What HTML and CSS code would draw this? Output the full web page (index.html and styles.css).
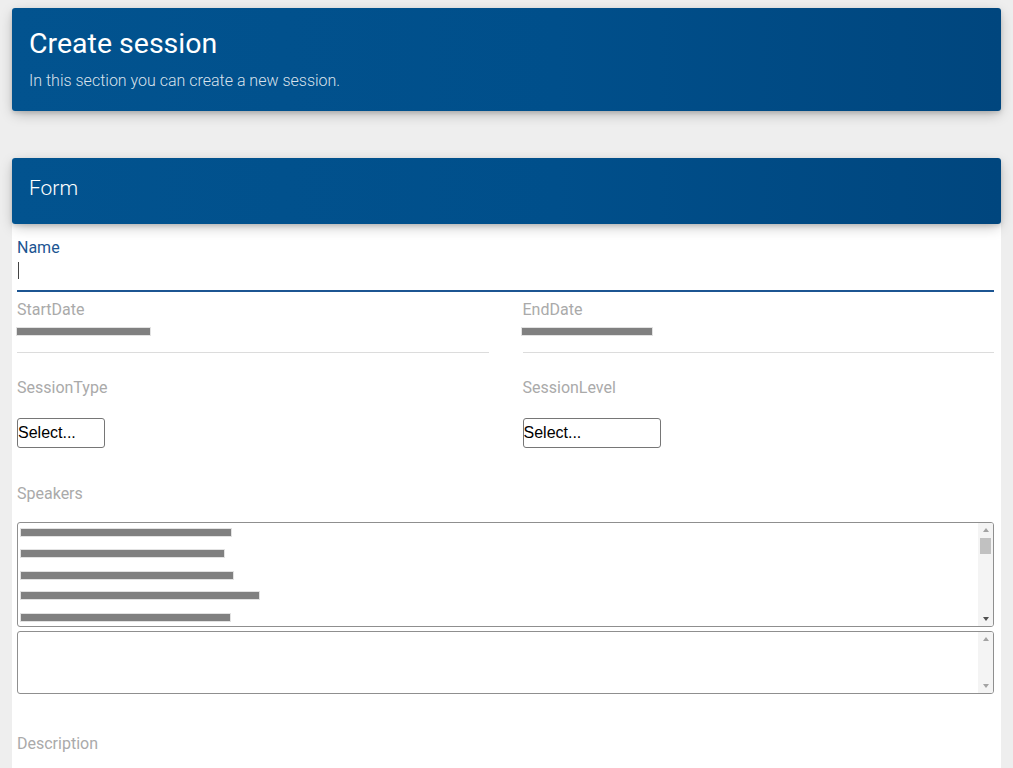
FILE: index.html
```html
<!DOCTYPE html>
<html>
<head>
<meta charset="utf-8">
<link rel="stylesheet" href="styles.css">
</head>
<body>
<div class="page">
  <div class="hero card-head">
    <h1 class="hero-title">Create session</h1>
    <p class="hero-sub">In this section you can create a new session.</p>
  </div>

  <div class="card">
    <div class="form-head card-head">Form</div>
    <div class="card-body">
      <div class="field field-focus">
        <div class="label label-active">Name</div>
        <div class="input input-focus"><span class="caret"></span></div>
      </div>

      <div class="row">
        <div class="field">
          <div class="label">StartDate</div>
          <div class="input input-date"><span class="redact" style="width:133px"></span></div>
        </div>
        <div class="field">
          <div class="label">EndDate</div>
          <div class="input input-date"><span class="redact redact-shift" style="width:130px"></span></div>
        </div>
      </div>

      <div class="row row-select">
        <div class="field">
          <div class="label">SessionType</div>
          <div class="select select-sm">Select...</div>
        </div>
        <div class="field">
          <div class="label">SessionLevel</div>
          <div class="select select-lg">Select...</div>
        </div>
      </div>

      <div class="field field-speakers">
        <div class="label">Speakers</div>
        <div class="listbox">
          <div class="list-items">
            <span class="item item-a"><span class="redact" style="width:210px"></span></span>
            <span class="item item-b"><span class="redact" style="width:203px"></span></span>
            <span class="item item-c"><span class="redact" style="width:212px"></span></span>
            <span class="item item-b"><span class="redact" style="width:238px"></span></span>
            <span class="item item-a"><span class="redact" style="width:209px"></span></span>
          </div>
          <div class="sbar">
            <span class="arrow arrow-up"></span>
            <span class="thumb"></span>
            <span class="sbar-fill"></span>
            <span class="arrow arrow-down dark"></span>
          </div>
        </div>
        <div class="textbox">
          <div class="textbox-area"></div>
          <div class="sbar">
            <span class="arrow arrow-up"></span>
            <span class="sbar-fill"></span>
            <span class="arrow arrow-down"></span>
          </div>
        </div>
      </div>

      <div class="field field-desc">
        <div class="label">Description</div>
      </div>
    </div>
  </div>
</div>
</body>
</html>
```

FILE: styles.css
```css
html, body {
  margin: 0;
  padding: 0;
  background: #eeeeee;
  font-family: Roboto, "Noto Sans", sans-serif;
  overflow: hidden;
}

.page {
  padding: 8px 12px 0 12px;
}

.card-head {
  background: linear-gradient(90deg, #02538f 0%, #004f8b 55%, #00467e 100%);
  color: #ffffff;
  border-radius: 3px;
  box-shadow: 0 4px 14px -2px rgba(0, 0, 0, 0.28), 0 2px 4px rgba(0, 0, 0, 0.12);
}

.hero {
  height: 103px;
  box-sizing: border-box;
  padding: 20px 17px 0 17px;
}

.hero-title {
  margin: 0;
  font-size: 28.5px;
  font-weight: 400;
  line-height: 32px;
}

.hero-sub {
  margin: 11px 0 0 0;
  font-size: 16px;
  font-weight: 300;
  line-height: 20px;
  color: rgba(255, 255, 255, 0.85);
}

.card {
  margin-top: 47px;
  background: #ffffff;
  border-radius: 3px;
  min-height: 620px;
}

.form-head {
  position: relative;
  height: 66px;
  box-sizing: border-box;
  padding: 18px 17px 0 17px;
  font-size: 21px;
  font-weight: 300;
  line-height: 24px;
}

.card-body {
  padding: 14px 7px 0 5px;
}

.label {
  font-size: 16px;
  line-height: 20px;
  color: #aaaaaa;
}

.label-active {
  color: #1c5592;
}

.input {
  box-sizing: border-box;
  height: 33px;
  border-bottom: 1px solid #dcdcdc;
  position: relative;
}

.input-focus {
  height: 30px;
  border-bottom: 2px solid #1c5592;
}

.caret {
  display: block;
  width: 1px;
  height: 17px;
  background: #444;
  margin: 4px 0 0 1px;
}

.input-date {
  height: 33px;
  padding-top: 8px;
}

.redact {
  display: block;
  height: 7px;
  background: #808080;
  box-shadow: 0 0 0 1px #e2e2e2;
}

.redact-shift {
  margin-left: -1px;
}

.row {
  display: grid;
  grid-template-columns: 1fr 1fr;
  column-gap: 34px;
}

.field-focus {
  margin-bottom: 8px;
}

.row-select {
  margin-top: 25px;
}

.select {
  margin-top: 20px;
  box-sizing: border-box;
  height: 30px;
  border: 1px solid #767676;
  border-radius: 3px;
  font-family: "Liberation Sans", Arial, sans-serif;
  font-size: 16px;
  line-height: 28px;
  color: #000;
  padding-left: 0;
}

.select-sm { width: 88px; }
.select-lg { width: 138px; }

.field-speakers {
  margin-top: 36px;
}

.listbox, .textbox {
  box-sizing: border-box;
  border: 1px solid #8f8f8f;
  border-radius: 3px;
  display: flex;
  overflow: hidden;
}

.listbox {
  margin-top: 18px;
  height: 105px;
}

.list-items {
  flex: 1;
  display: flex;
  flex-direction: column;
  padding: 6px 0 0 3px;
}

.item {
  display: block;
  flex-shrink: 0;
  height: 21px;
}

.item-b { height: 22px; }
.item-c { height: 20px; }

.textbox {
  margin-top: 4px;
  height: 63px;
}

.textbox-area {
  flex: 1;
}

.sbar {
  width: 15px;
  background: #f4f4f4;
  display: flex;
  flex-direction: column;
  align-items: center;
}

.sbar-fill { flex: 1; }

.arrow {
  display: block;
  width: 0;
  height: 0;
  border-left: 3px solid transparent;
  border-right: 3px solid transparent;
  margin: 5px 0;
}

.arrow-up { border-bottom: 4px solid #a3a3a3; }
.arrow-down { border-top: 4px solid #a3a3a3; }
.arrow-down.dark { border-top-color: #505050; }

.thumb {
  display: block;
  width: 11px;
  height: 16px;
  background: #c1c1c1;
  margin-top: 1px;
}

.field-desc {
  margin-top: 40px;
}
```
